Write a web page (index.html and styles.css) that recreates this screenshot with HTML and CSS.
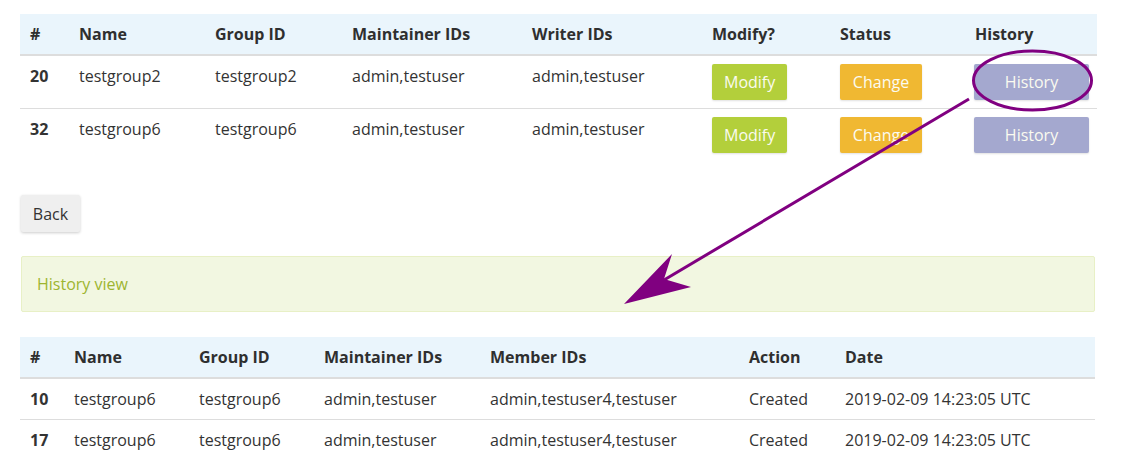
FILE: index.html
```html
<!DOCTYPE html>
<html>
<head>
<meta charset="utf-8">
<link rel="stylesheet" href="styles.css">
</head>
<body>
<div class="page">
  <table class="grid grid-groups">
    <colgroup>
      <col style="width:49px"><col style="width:136px"><col style="width:137px"><col style="width:180px">
      <col style="width:180px"><col style="width:128px"><col style="width:135px"><col style="width:132px">
    </colgroup>
    <thead>
      <tr><th>#</th><th>Name</th><th>Group ID</th><th>Maintainer IDs</th><th>Writer IDs</th><th>Modify?</th><th>Status</th><th>History</th></tr>
    </thead>
    <tbody>
      <tr>
        <td class="num">20</td><td>testgroup2</td><td>testgroup2</td><td>admin,testuser</td><td>admin,testuser</td>
        <td><span class="btn btn-modify">Modify</span></td>
        <td><span class="btn btn-change">Change</span></td>
        <td><span class="btn btn-history">History</span></td>
      </tr>
      <tr>
        <td class="num">32</td><td>testgroup6</td><td>testgroup6</td><td>admin,testuser</td><td>admin,testuser</td>
        <td><span class="btn btn-modify">Modify</span></td>
        <td><span class="btn btn-change">Change</span></td>
        <td><span class="btn btn-history">History</span></td>
      </tr>
    </tbody>
  </table>

  <div class="actions"><span class="btn btn-back">Back</span></div>

  <div class="alert">History view</div>

  <table class="grid grid-history">
    <colgroup>
      <col style="width:44px"><col style="width:125px"><col style="width:125px"><col style="width:166px">
      <col style="width:259px"><col style="width:96px"><col style="width:260px">
    </colgroup>
    <thead>
      <tr><th>#</th><th>Name</th><th>Group ID</th><th>Maintainer IDs</th><th>Member IDs</th><th>Action</th><th>Date</th></tr>
    </thead>
    <tbody>
      <tr><td class="num">10</td><td>testgroup6</td><td>testgroup6</td><td>admin,testuser</td><td>admin,testuser4,testuser</td><td>Created</td><td>2019-02-09 14:23:05 UTC</td></tr>
      <tr><td class="num">17</td><td>testgroup6</td><td>testgroup6</td><td>admin,testuser</td><td>admin,testuser4,testuser</td><td>Created</td><td>2019-02-09 14:23:05 UTC</td></tr>
    </tbody>
  </table>
</div>

<svg class="annotation" width="1124" height="475" viewBox="0 0 1124 475" xmlns="http://www.w3.org/2000/svg">
  <ellipse cx="1032.5" cy="80.5" rx="59" ry="29.5" fill="none" stroke="#800080" stroke-width="3"/>
  <line x1="969" y1="99" x2="664" y2="280" stroke="#800080" stroke-width="3"/>
  <polygon points="624,304 672,254 664,279 691,287" fill="#800080"/>
</svg>
</body>
</html>
```

FILE: styles.css
```css
html, body {
  margin: 0;
  padding: 0;
  background: #ffffff;
}

body {
  font-family: "Open Sans", "Liberation Sans", sans-serif;
  font-size: 16px;
  color: #333333;
}

.page {
  padding: 14px 0 0 20px;
}

.grid {
  border-collapse: collapse;
  table-layout: fixed;
}

.grid-groups { width: 1077px; }
.grid-history { width: 1075px; margin-top: 25px; }

.grid th,
.grid td {
  padding: 8px 10px;
  line-height: 24px;
  text-align: left;
  vertical-align: top;
  white-space: nowrap;
}

.grid thead th {
  background: #eaf5fc;
  font-weight: 700;
  color: #2f2f2f;
  border-bottom: 2px solid #dddddd;
}

.grid tbody tr + tr td {
  border-top: 1px solid #dddddd;
}

.grid td.num {
  font-weight: 700;
}

.btn {
  display: inline-block;
  box-sizing: border-box;
  height: 36px;
  padding: 6px 12px;
  line-height: 24px;
  border-radius: 2px;
  color: #fbfbf0;
  text-align: center;
  box-shadow: 0 1px 2px rgba(0, 0, 0, 0.12);
}

.btn-modify { background: #b3cf3b; width: 75px; }
.btn-change { background: #f0b832; width: 82px; }
.btn-history { background: #a4a8cf; width: 115px; margin-left: -1px; }

.actions {
  display: flex;
  margin-top: 34px;
  padding-left: 1px;
}

.btn-back {
  background: #efefef;
  color: #333333;
  height: 37px;
  width: 59px;
  padding: 7px 0 6px;
  box-shadow: 0 1px 3px rgba(0, 0, 0, 0.2);
}

.alert {
  box-sizing: border-box;
  margin: 24px 0 0 1px;
  width: 1074px;
  height: 56px;
  padding: 15px 15px;
  line-height: 24px;
  background: #f2f7e1;
  border: 1px solid #e8f0c6;
  border-radius: 2px;
  color: #9db530;
}

.annotation {
  position: absolute;
  left: 0;
  top: 0;
  pointer-events: none;
}
```
